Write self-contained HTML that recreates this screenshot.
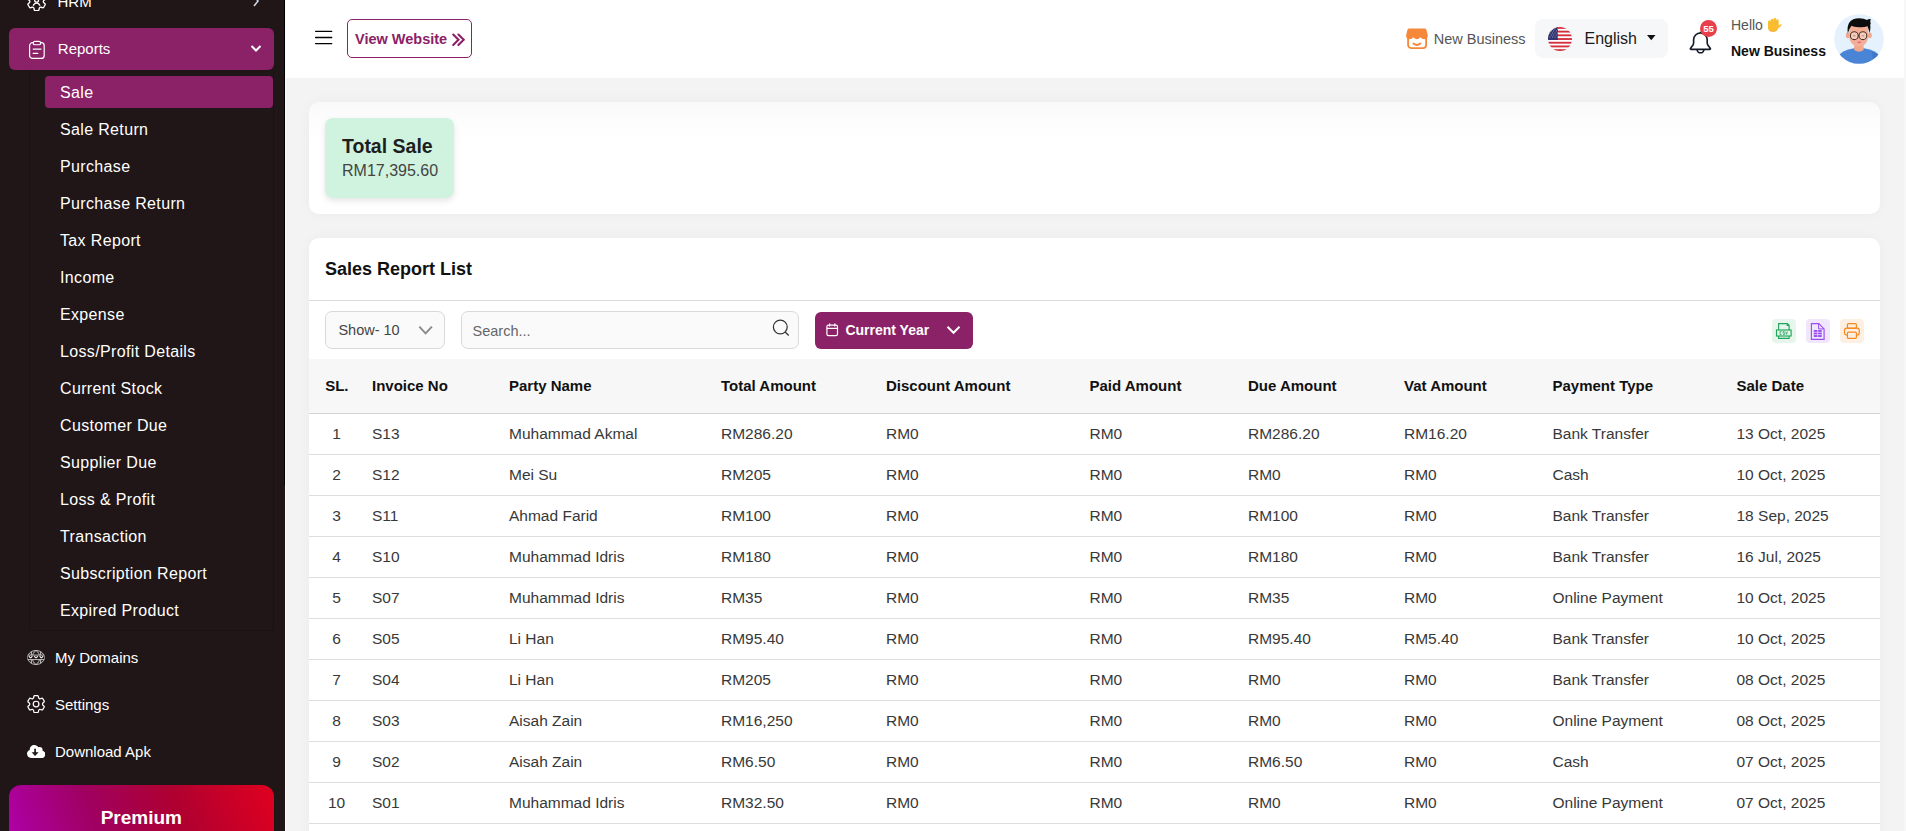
<!DOCTYPE html>
<html><head><meta charset="utf-8">
<style>
*{box-sizing:border-box;margin:0;padding:0}
html,body{width:1906px;height:831px;overflow:hidden;background:#f3f3f3;font-family:"Liberation Sans",sans-serif}
.a{position:absolute;white-space:nowrap;line-height:1}
#sb{position:absolute;left:0;top:0;width:285px;height:831px;background:#201617;overflow:hidden}
.si{position:absolute;left:60px;color:#fff;font-size:16px;line-height:1;letter-spacing:.35px;white-space:nowrap}
.w{color:#fff}
#hd{position:absolute;left:286px;top:0;width:1619px;height:78px;background:#fff}
.card{position:absolute;left:309px;width:1571px;background:#fff;border-radius:10px;box-shadow:0 0 14px rgba(0,0,0,.035)}
.th{position:absolute;font-size:15px;font-weight:700;color:#111;line-height:1;white-space:nowrap;top:378.3px}
.td{position:absolute;font-size:15.5px;color:#383838;line-height:1;white-space:nowrap}
.rb{position:absolute;left:309px;width:1571px;height:1px;background:#dedede}
</style></head><body>
<div id="sb">
  <!-- HRM -->
  <svg class="a" style="left:27.2px;top:-7.8px" width="19.2" height="19.2" viewBox="2.4 2.4 19.2 19.2" fill="none" stroke="#fff" stroke-width="1.35"><path d="M9.594 3.94c.09-.542.56-.94 1.11-.94h2.593c.55 0 1.02.398 1.11.94l.213 1.281c.063.374.313.686.645.87.074.04.147.083.22.127.325.196.72.257 1.075.124l1.217-.456a1.125 1.125 0 0 1 1.37.49l1.296 2.247a1.125 1.125 0 0 1-.26 1.431l-1.003.827c-.293.241-.438.613-.43.992a7.723 7.723 0 0 1 0 .255c-.008.378.137.75.43.991l1.004.827c.424.35.534.955.26 1.43l-1.298 2.247a1.125 1.125 0 0 1-1.369.491l-1.217-.456c-.355-.133-.75-.072-1.076.124a6.47 6.47 0 0 1-.22.128c-.331.183-.581.495-.644.869l-.213 1.281c-.09.543-.56.94-1.110.94h-2.594c-.55 0-1.019-.398-1.11-.94l-.213-1.281c-.062-.374-.312-.686-.644-.87a6.520 6.520 0 0 1-.22-.127c-.325-.196-.72-.257-1.076-.124l-1.217.456a1.125 1.125 0 0 1-1.369-.49l-1.297-2.247a1.125 1.125 0 0 1 .26-1.431l1.004-.827c.292-.24.437-.613.43-.991a6.932 6.932 0 0 1 0-.255c.007-.38-.138-.751-.43-.992l-1.004-.827a1.125 1.125 0 0 1-.26-1.43l1.297-2.247a1.125 1.125 0 0 1 1.37-.491l1.216.456c.356.133.751.072 1.076-.124.072-.044.146-.086.22-.128.332-.183.582-.495.644-.869l.214-1.28Z"/><circle cx="12" cy="10.6" r="1.9"/><path d="M8.6 16.2c.7-1.9 1.9-2.7 3.4-2.7s2.7.8 3.4 2.7"/></svg>
  <div class="a w" style="left:57.5px;top:-5.8px;font-size:15px">HRM</div>
  <svg class="a" style="left:251px;top:-5px" width="10" height="12" viewBox="0 0 10 12" fill="none" stroke="#cfd3e0" stroke-width="1.6"><path d="M3 1l4 5-4 5"/></svg>
  <!-- Reports -->
  <div class="a" style="left:9px;top:28px;width:265px;height:42px;background:#8b2167;border-radius:6px"></div>
  <svg class="a" style="left:28px;top:40px" width="18" height="20" viewBox="0 0 18 20" fill="none" stroke="#fff" stroke-width="1.2"><rect x="1.6" y="2.7" width="14.6" height="15.7" rx="3"/><rect x="5.2" y="1.45" width="7.4" height="3.3" rx="1.6" fill="#8b2167"/><path d="M5.2 9.1h7.8M5.2 13.4h4.6" stroke-linecap="round"/></svg>
  <div class="a w" style="left:57.8px;top:41.2px;font-size:15px">Reports</div>
  <svg class="a" style="left:250px;top:44px" width="12" height="9" viewBox="0 0 12 9" fill="none" stroke="#fff" stroke-width="2"><path d="M1.5 2l4.5 4.5L10.5 2"/></svg>
  <!-- submenu -->
  <div class="a" style="left:29px;top:70px;width:245px;height:561px;border:1px solid #1a1112;border-top:0"></div>
  <div class="a" style="left:45px;top:76px;width:228px;height:32px;background:#8b2167;border-radius:4px"></div>
  <div class="si" style="top:84.5px">Sale</div>
  <div class="si" style="top:121.5px">Sale Return</div>
  <div class="si" style="top:158.5px">Purchase</div>
  <div class="si" style="top:195.5px">Purchase Return</div>
  <div class="si" style="top:232.5px">Tax Report</div>
  <div class="si" style="top:269.5px">Income</div>
  <div class="si" style="top:306.5px">Expense</div>
  <div class="si" style="top:343.5px">Loss/Profit Details</div>
  <div class="si" style="top:380.5px">Current Stock</div>
  <div class="si" style="top:417.5px">Customer Due</div>
  <div class="si" style="top:454.5px">Supplier Due</div>
  <div class="si" style="top:491.5px">Loss &amp; Profit</div>
  <div class="si" style="top:528.5px">Transaction</div>
  <div class="si" style="top:565.5px">Subscription Report</div>
  <div class="si" style="top:602.5px">Expired Product</div>
  <!-- bottom items -->
  <svg class="a" style="left:27px;top:649.5px" width="18" height="15" viewBox="0 0 18 15" fill="none" stroke="#c8c8c8" stroke-width=".95"><ellipse cx="9" cy="7.5" rx="8.4" ry="7"/><path d="M9 .5C6.3 2.3 5.3 4.8 5.3 7.5s1 5.2 3.7 7M9 .5c2.7 1.8 3.7 4.3 3.7 7s-1 5.2-3.7 7M4.4 1.8v3.4M13.6 1.8v3.4M4.4 9.8v3.4M13.6 9.8v3.4"/><rect x=".9" y="5.1" width="16.2" height="4.5" fill="#201617" stroke="none"/><path d="M.8 5.1H17.2M.8 9.6H17.2"/><path d="M1.9 6.1q1.7 3.6 3.4 0M7.3 6.1q1.7 3.6 3.4 0M12.7 6.1q1.7 3.6 3.4 0" stroke="#f0f0f0" stroke-width="1.2"/></svg>
  <svg class="a" style="left:26.9px;top:694.8px" width="18.2" height="18.2" viewBox="2.4 2.4 19.2 19.2" fill="none" stroke="#fff" stroke-width="1.3"><path d="M9.594 3.94c.09-.542.56-.94 1.11-.94h2.593c.55 0 1.02.398 1.11.94l.213 1.281c.063.374.313.686.645.87.074.04.147.083.22.127.325.196.72.257 1.075.124l1.217-.456a1.125 1.125 0 0 1 1.37.49l1.296 2.247a1.125 1.125 0 0 1-.26 1.431l-1.003.827c-.293.241-.438.613-.43.992a7.723 7.723 0 0 1 0 .255c-.008.378.137.75.43.991l1.004.827c.424.35.534.955.26 1.43l-1.298 2.247a1.125 1.125 0 0 1-1.369.491l-1.217-.456c-.355-.133-.75-.072-1.076.124a6.47 6.47 0 0 1-.22.128c-.331.183-.581.495-.644.869l-.213 1.281c-.09.543-.56.94-1.110.94h-2.594c-.55 0-1.019-.398-1.11-.94l-.213-1.281c-.062-.374-.312-.686-.644-.87a6.520 6.520 0 0 1-.22-.127c-.325-.196-.72-.257-1.076-.124l-1.217.456a1.125 1.125 0 0 1-1.369-.49l-1.297-2.247a1.125 1.125 0 0 1 .26-1.431l1.004-.827c.292-.24.437-.613.43-.991a6.932 6.932 0 0 1 0-.255c.007-.38-.138-.751-.43-.992l-1.004-.827a1.125 1.125 0 0 1-.26-1.43l1.297-2.247a1.125 1.125 0 0 1 1.37-.491l1.216.456c.356.133.751.072 1.076-.124.072-.044.146-.086.22-.128.332-.183.582-.495.644-.869l.214-1.28Z"/><circle cx="12" cy="12" r="3"/></svg>
  <svg class="a" style="left:26.8px;top:744.5px" width="18.4" height="13" viewBox="0 32 640 448"><path d="M144 480C64.500 480 0 415.500 0 336c0-62.800 40.200-116.200 96.200-135.900-.1-2.700-.2-5.400-.2-8.100 0-88.400 71.600-160 160-160 59.300 0 111 32.200 138.700 80.200C409.900 102 428.300 96 448 96c53 0 96 43 96 96 0 12.200-2.300 23.800-6.400 34.600C596 238.400 640 290.100 640 352c0 70.700-57.300 128-128 128H144z" fill="#fff"/><path d="M282 178V330" stroke="#201617" stroke-width="58" stroke-linecap="round"/><path d="M180 290H384L282 400Z" fill="#201617" stroke="#201617" stroke-width="20" stroke-linejoin="round"/></svg>
  <div class="a w" style="left:55px;top:650.4px;font-size:15px">My Domains</div>
  <div class="a w" style="left:55px;top:697.4px;font-size:15px">Settings</div>
  <div class="a w" style="left:55px;top:744.4px;font-size:15px">Download Apk</div>
  <div class="a" style="left:9px;top:785px;width:265px;height:80px;border-radius:12px;background:linear-gradient(70deg,#b000b0 0%,#a00060 35%,#b00030 65%,#e00020 100%)"></div>
  <div class="a w" style="left:100.7px;top:807.7px;font-size:19px;font-weight:700">Premium</div>
  <div class="a" style="left:284px;top:0;width:1px;height:485px;background:#000"></div>
</div>
<div class="a" style="left:285px;top:0;width:1px;height:831px;background:#fbfbfb"></div>

<div id="hd"></div>
<!-- hamburger -->
<svg class="a" style="left:310px;top:25px" width="30" height="25" viewBox="0 0 30 25" stroke="#000" stroke-width="1.35" stroke-linecap="round"><path d="M5.6 6.3H21.7M5.6 12.45H21.7M5.6 18.6H21.7"/></svg>
<!-- view website -->
<div class="a" style="left:347px;top:19px;width:125px;height:39px;border:1.5px solid #8b2167;border-radius:5px"></div>
<div class="a" style="left:355px;top:31.8px;font-size:14.5px;font-weight:700;color:#8b2167">View Website</div>
<svg class="a" style="left:451px;top:31.5px" width="15" height="15" viewBox="0 0 15 15" fill="none" stroke="#8b2167" stroke-width="2.1" stroke-linecap="round" stroke-linejoin="miter"><path d="M2.2 2.5l5.3 5.3-5.3 5.3M7.4 2.5l5.3 5.3-5.3 5.3"/></svg>
<!-- store -->
<svg class="a" style="left:1406px;top:28px" width="22" height="22" viewBox="0 0 22 22"><rect x="2.1" y="6" width="18" height="14.1" rx="3" fill="none" stroke="#f5883a" stroke-width="1.8"/><path d="M3.3 .6H18.7Q20 .6 20.5 2L21.8 7.2Q21.9 10.8 19 11.1Q16.2 11.4 14.3 9.2Q12.8 11.2 10.9 11.2Q9 11.2 7.4 9.2Q5.6 11.4 2.9 11.1Q0 10.8 .1 7.2L1.4 2Q1.9 .6 3.3 .6Z" fill="#f5883a"/><path d="M7.4 15.6Q10.9 18.4 14.4 15.6" stroke="#f5883a" stroke-width="1.9" fill="none" stroke-linecap="round"/></svg>
<div class="a" style="left:1433.7px;top:31.9px;font-size:14.5px;color:#555">New Business</div>
<!-- language -->
<div class="a" style="left:1535px;top:19px;width:133px;height:39px;background:#f6f7f9;border-radius:8px"></div>
<svg class="a" style="left:1548px;top:27px" width="24" height="24" viewBox="0 0 24 24"><defs><clipPath id="fc"><circle cx="12" cy="12" r="12"/></clipPath></defs><g clip-path="url(#fc)"><rect width="24" height="24" fill="#fff"/><rect y="0" width="24" height="1.85" fill="#d22f3c"/><rect y="3.7" width="24" height="1.85" fill="#d22f3c"/><rect y="7.4" width="24" height="1.85" fill="#d22f3c"/><rect y="11.1" width="24" height="1.85" fill="#d22f3c"/><rect y="14.8" width="24" height="1.85" fill="#d22f3c"/><rect y="18.5" width="24" height="1.85" fill="#d22f3c"/><rect y="22.2" width="24" height="1.85" fill="#d22f3c"/><rect width="9.9" height="12.95" fill="#2f3470"/><g fill="#fff"><circle cx="2" cy="2" r=".45"/><circle cx="4.5" cy="2" r=".45"/><circle cx="7" cy="2" r=".45"/><circle cx="9.3" cy="2" r=".45"/><circle cx="3.2" cy="4" r=".45"/><circle cx="5.7" cy="4" r=".45"/><circle cx="8.2" cy="4" r=".45"/><circle cx="2" cy="6" r=".45"/><circle cx="4.5" cy="6" r=".45"/><circle cx="7" cy="6" r=".45"/><circle cx="9.3" cy="6" r=".45"/><circle cx="3.2" cy="8" r=".45"/><circle cx="5.7" cy="8" r=".45"/><circle cx="8.2" cy="8" r=".45"/><circle cx="2" cy="10" r=".45"/><circle cx="4.5" cy="10" r=".45"/><circle cx="7" cy="10" r=".45"/><circle cx="9.3" cy="10" r=".45"/></g></g></svg>
<div class="a" style="left:1584.5px;top:31.2px;font-size:16px;color:#1a1a1a">English</div>
<svg class="a" style="left:1647px;top:35.2px" width="8.5" height="5.5" viewBox="0 0 8.5 5.5"><path d="M0 0h8.5L4.25 5.2z" fill="#111"/></svg>
<!-- bell -->
<svg class="a" style="left:1684px;top:15px" width="40" height="45" viewBox="0 0 40 45" fill="none" stroke="#141a26" stroke-width="1.65" stroke-linejoin="round"><path d="M7 34.3H25.8Q26.9 34.3 26.2 33.2L24.2 30.6Q23.2 29.4 23.2 27.8V24.8A6.8 6.8 0 0 0 9.6 24.8V27.8Q9.6 29.4 8.6 30.6L6.6 33.2Q5.9 34.3 7 34.3Z"/><path d="M13.1 34.4A3.4 3.4 0 0 0 19.9 34.4"/><path d="M16.4 16.8V18"/></svg>
<div class="a" style="left:1700px;top:20px;width:17px;height:17px;border-radius:50%;background:#e8404b"></div>
<div class="a" style="left:1700px;top:23.9px;width:17px;text-align:center;font-size:9.6px;font-weight:700;color:#fff">55</div>
<div class="a" style="left:1731px;top:18.35px;font-size:14px;color:#555">Hello</div>
<svg class="a" style="left:1766px;top:16px" width="17" height="18" viewBox="0 0 17 18"><g fill="#fbbd2e"><rect x="2" y="4.6" width="2.7" height="9" rx="1.35"/><rect x="4.6" y="2.9" width="2.8" height="10" rx="1.4"/><rect x="7.4" y="2" width="2.8" height="10" rx="1.4"/><rect x="10.1" y="3.3" width="2.6" height="9" rx="1.3"/><path d="M2 9.5H12.7V12.2L15.3 9.6Q16 9 15.6 8.6Q15 8.1 13.9 8.7L12.5 9.6V11.5Q11.5 15.7 7.3 15.7Q2 15.7 2 11z"/></g><path d="M4.65 5.5V9M7.4 4V9M10.15 5V9" stroke="#e39a1a" stroke-width=".5" opacity=".7"/><path d="M3 14.5Q7 16.8 10.5 14.3" stroke="#f39a2a" stroke-width=".9" fill="none" opacity=".6"/></svg>
<div class="a" style="left:1731px;top:43.85px;font-size:14px;font-weight:700;color:#111">New Business</div>
<!-- avatar -->
<svg class="a" style="left:1834px;top:14px" width="50" height="50" viewBox="0 0 50 50"><defs><clipPath id="av"><circle cx="25" cy="25" r="24.8"/></clipPath></defs><circle cx="25" cy="25" r="24.8" fill="#e5f1fc"/><g clip-path="url(#av)"><path d="M4 42Q8 36.5 20 34.3H30Q42 36.5 46 42V52H4z" fill="#4a84d6"/><path d="M38 37.5Q43 39 46 42V52H40z" fill="#3f76c8"/><path d="M20.2 29H29.6V36Q25 39.5 20.2 36z" fill="#f0a88c"/><ellipse cx="13.8" cy="21.3" rx="2" ry="2.9" fill="#f0a88c"/><ellipse cx="35.8" cy="21.3" rx="2" ry="2.9" fill="#f0a88c"/><path d="M15.2 17Q15.2 9 24.8 9Q34.2 9 34.2 17V22.5Q34 28 30 31Q27.5 32.6 24.8 32.6Q22 32.6 19.5 31Q15.4 28 15.2 22.5z" fill="#f4b096"/><path d="M13.8 19.5Q12.8 12 15.5 8.3Q18.5 4.3 25 4.3Q30 4.3 33 6Q35.5 4.5 37 5.5Q36 6.5 36.3 8Q37.3 9 36.3 10.5Q36.8 14 35.8 19Q34.5 15 33.5 12.2Q30 13.5 25 13.2Q19.5 13 17.5 11.8Q15.5 14 13.8 19.5z" fill="#0d0d0d"/><circle cx="20.3" cy="21.7" r="3.9" fill="#f9e0d6" fill-opacity=".6" stroke="#4a322a" stroke-width="1.05"/><circle cx="28.9" cy="21.7" r="3.9" fill="#f9e0d6" fill-opacity=".6" stroke="#4a322a" stroke-width="1.05"/><path d="M24.3 21.6h.8" stroke="#3a2a26" stroke-width="1.2"/><path d="M19 21.8h2.6M27.6 21.8h2.6" stroke="#777" stroke-width=".7"/><path d="M23.2 27.4Q25.2 28.3 27.3 27.1Q26.8 29.4 25.1 29.3Q23.6 29.2 23.2 27.4z" fill="#e25f86"/></g></svg>

<!-- summary card -->
<div class="card" style="top:102px;height:112px;background:linear-gradient(180deg,#f9f9f9 0,#fdfdfd 20px,#fff 45px)"></div>
<div class="a" style="left:325px;top:118px;width:129px;height:80px;background:#cff3df;border-radius:8px;box-shadow:0 3px 6px rgba(0,0,0,.10)"></div>
<div class="a" style="left:342px;top:136.8px;font-size:19.5px;font-weight:700;color:#1e1e1e">Total Sale</div>
<div class="a" style="left:342px;top:162.6px;font-size:16px;color:#444">RM17,395.60</div>
<!-- list card -->
<div class="card" style="top:238px;height:620px"></div>
<div class="a" style="left:325px;top:260.2px;font-size:18px;font-weight:700;color:#111">Sales Report List</div>
<div class="a" style="left:309px;top:300px;width:1571px;height:1px;background:#dcdcdc"></div>
<div class="a" style="left:325px;top:311px;width:120px;height:38px;border:1px solid #d9d9d9;background:#fafafa;border-radius:7px"></div>
<div class="a" style="left:338.4px;top:322.9px;font-size:14.5px;color:#444">Show- 10</div>
<svg class="a" style="left:418px;top:325px" width="15" height="10" viewBox="0 0 15 10" fill="none" stroke="#8a8a8a" stroke-width="1.9"><path d="M1.3 1.6L7.6 8.3L13.9 1.6"/></svg>
<div class="a" style="left:461px;top:311px;width:338px;height:38px;border:1px solid #d9d9d9;background:#fafafa;border-radius:7px"></div>
<div class="a" style="left:472.5px;top:323.5px;font-size:14.5px;color:#666">Search...</div>
<svg class="a" style="left:772px;top:319px" width="18" height="18" viewBox="0 0 18 18" fill="none" stroke="#333" stroke-width="1.25"><circle cx="8.3" cy="8" r="6.9"/><path d="M13.2 13L16.7 16.5"/></svg>
<div class="a" style="left:815px;top:312px;width:158px;height:37px;background:#8b2167;border-radius:6px"></div>
<svg class="a" style="left:825px;top:322px" width="14" height="15" viewBox="0 0 14 15" fill="none" stroke="#fff" stroke-width="1.2"><rect x="1.9" y="3.1" width="10.6" height="10.5" rx="1.6"/><path d="M1.9 6.3h10.6M4.6 1.4v3M9.8 1.4v3"/></svg>
<div class="a" style="left:845.4px;top:322.6px;font-size:14px;font-weight:700;color:#fff">Current Year</div>
<svg class="a" style="left:946px;top:325px" width="15" height="10" viewBox="0 0 15 10" fill="none" stroke="#fff" stroke-width="2"><path d="M1.5 1.8l6 6 6-6"/></svg>
<!-- export icons -->
<div class="a" style="left:1772px;top:319px;width:24px;height:24px;border-radius:4px;background:#e6f6ec"></div>
<svg class="a" style="left:1772px;top:319px" width="24" height="24" viewBox="0 0 24 24" fill="none" stroke="#22a55a" stroke-width="1.15"><path d="M6.6 11V4.6h8.8l1.7 1.7V11"/><path d="M15.2 4.6v1.9h1.9"/><rect x="4.5" y="11" width="14.6" height="6"/><path d="M6.6 17v2.3h10.5V17"/><path d="M9.6 12.6h-1.6v2.8h1.6M12.6 12.6h-1.5v1.4h1.5v1.4h-1.5M13.7 12.6l.9 2.8.9-2.8" stroke-width=".8"/></svg>
<div class="a" style="left:1806px;top:319px;width:24px;height:24px;border-radius:4px;background:#f1e7fd"></div>
<svg class="a" style="left:1806px;top:319px" width="24" height="24" viewBox="0 0 24 24" fill="none" stroke="#9a4ef0" stroke-width="1.15"><path d="M5.4 4.6h7.4l5.3 5.3v10.4H5.4z"/><path d="M12.6 4.6v5.3h5.3" stroke-width="1"/><rect x="7.8" y="11" width="7.9" height="7" fill="#9a4ef0" stroke="none"/><path d="M7.8 13.3h7.9M7.8 15.6h7.9M11.7 11v7" stroke="#f1e7fd" stroke-width=".7"/></svg>
<div class="a" style="left:1840px;top:319px;width:24px;height:24px;border-radius:4px;background:#fdf0e2"></div>
<svg class="a" style="left:1840px;top:319px" width="24" height="24" viewBox="0 0 24 24" fill="none" stroke="#f68a1f" stroke-width="1.2"><rect x="7.4" y="4.7" width="9" height="4.6" rx="1"/><path d="M7.4 16.1H6.4A2.3 2.3 0 014.5 13.8V11.5A2.3 2.3 0 016.8 9.2H17A2.3 2.3 0 0119.3 11.5V13.8A2.3 2.3 0 0117 16.1H16.4"/><rect x="7.4" y="13.2" width="9" height="6.1" rx="1"/></svg>
<!-- table -->
<div class="a" style="left:309px;top:359px;width:1571px;height:54px;background:#f7f7f7"></div>
<div class="rb" style="top:413px;background:#d6d6d6"></div>
<div class="th" style="left:325.2px">SL.</div>
<div class="th" style="left:372px">Invoice No</div>
<div class="th" style="left:509px">Party Name</div>
<div class="th" style="left:721px">Total Amount</div>
<div class="th" style="left:886px">Discount Amount</div>
<div class="th" style="left:1089.5px">Paid Amount</div>
<div class="th" style="left:1248px">Due Amount</div>
<div class="th" style="left:1404px">Vat Amount</div>
<div class="th" style="left:1552.5px">Payment Type</div>
<div class="th" style="left:1736.5px">Sale Date</div>
<div class="td" style="left:311px;width:51px;text-align:center;top:425.6px">1</div><div class="td" style="left:372px;top:425.6px">S13</div><div class="td" style="left:509px;top:425.6px">Muhammad Akmal</div><div class="td" style="left:721px;top:425.6px">RM286.20</div><div class="td" style="left:886px;top:425.6px">RM0</div><div class="td" style="left:1089.5px;top:425.6px">RM0</div><div class="td" style="left:1248px;top:425.6px">RM286.20</div><div class="td" style="left:1404px;top:425.6px">RM16.20</div><div class="td" style="left:1552.5px;top:425.6px">Bank Transfer</div><div class="td" style="left:1736.5px;top:425.6px">13 Oct, 2025</div><div class="rb" style="top:454px"></div>
<div class="td" style="left:311px;width:51px;text-align:center;top:466.6px">2</div><div class="td" style="left:372px;top:466.6px">S12</div><div class="td" style="left:509px;top:466.6px">Mei Su</div><div class="td" style="left:721px;top:466.6px">RM205</div><div class="td" style="left:886px;top:466.6px">RM0</div><div class="td" style="left:1089.5px;top:466.6px">RM0</div><div class="td" style="left:1248px;top:466.6px">RM0</div><div class="td" style="left:1404px;top:466.6px">RM0</div><div class="td" style="left:1552.5px;top:466.6px">Cash</div><div class="td" style="left:1736.5px;top:466.6px">10 Oct, 2025</div><div class="rb" style="top:495px"></div>
<div class="td" style="left:311px;width:51px;text-align:center;top:507.6px">3</div><div class="td" style="left:372px;top:507.6px">S11</div><div class="td" style="left:509px;top:507.6px">Ahmad Farid</div><div class="td" style="left:721px;top:507.6px">RM100</div><div class="td" style="left:886px;top:507.6px">RM0</div><div class="td" style="left:1089.5px;top:507.6px">RM0</div><div class="td" style="left:1248px;top:507.6px">RM100</div><div class="td" style="left:1404px;top:507.6px">RM0</div><div class="td" style="left:1552.5px;top:507.6px">Bank Transfer</div><div class="td" style="left:1736.5px;top:507.6px">18 Sep, 2025</div><div class="rb" style="top:536px"></div>
<div class="td" style="left:311px;width:51px;text-align:center;top:548.6px">4</div><div class="td" style="left:372px;top:548.6px">S10</div><div class="td" style="left:509px;top:548.6px">Muhammad Idris</div><div class="td" style="left:721px;top:548.6px">RM180</div><div class="td" style="left:886px;top:548.6px">RM0</div><div class="td" style="left:1089.5px;top:548.6px">RM0</div><div class="td" style="left:1248px;top:548.6px">RM180</div><div class="td" style="left:1404px;top:548.6px">RM0</div><div class="td" style="left:1552.5px;top:548.6px">Bank Transfer</div><div class="td" style="left:1736.5px;top:548.6px">16 Jul, 2025</div><div class="rb" style="top:577px"></div>
<div class="td" style="left:311px;width:51px;text-align:center;top:589.6px">5</div><div class="td" style="left:372px;top:589.6px">S07</div><div class="td" style="left:509px;top:589.6px">Muhammad Idris</div><div class="td" style="left:721px;top:589.6px">RM35</div><div class="td" style="left:886px;top:589.6px">RM0</div><div class="td" style="left:1089.5px;top:589.6px">RM0</div><div class="td" style="left:1248px;top:589.6px">RM35</div><div class="td" style="left:1404px;top:589.6px">RM0</div><div class="td" style="left:1552.5px;top:589.6px">Online Payment</div><div class="td" style="left:1736.5px;top:589.6px">10 Oct, 2025</div><div class="rb" style="top:618px"></div>
<div class="td" style="left:311px;width:51px;text-align:center;top:630.6px">6</div><div class="td" style="left:372px;top:630.6px">S05</div><div class="td" style="left:509px;top:630.6px">Li Han</div><div class="td" style="left:721px;top:630.6px">RM95.40</div><div class="td" style="left:886px;top:630.6px">RM0</div><div class="td" style="left:1089.5px;top:630.6px">RM0</div><div class="td" style="left:1248px;top:630.6px">RM95.40</div><div class="td" style="left:1404px;top:630.6px">RM5.40</div><div class="td" style="left:1552.5px;top:630.6px">Bank Transfer</div><div class="td" style="left:1736.5px;top:630.6px">10 Oct, 2025</div><div class="rb" style="top:659px"></div>
<div class="td" style="left:311px;width:51px;text-align:center;top:671.6px">7</div><div class="td" style="left:372px;top:671.6px">S04</div><div class="td" style="left:509px;top:671.6px">Li Han</div><div class="td" style="left:721px;top:671.6px">RM205</div><div class="td" style="left:886px;top:671.6px">RM0</div><div class="td" style="left:1089.5px;top:671.6px">RM0</div><div class="td" style="left:1248px;top:671.6px">RM0</div><div class="td" style="left:1404px;top:671.6px">RM0</div><div class="td" style="left:1552.5px;top:671.6px">Bank Transfer</div><div class="td" style="left:1736.5px;top:671.6px">08 Oct, 2025</div><div class="rb" style="top:700px"></div>
<div class="td" style="left:311px;width:51px;text-align:center;top:712.6px">8</div><div class="td" style="left:372px;top:712.6px">S03</div><div class="td" style="left:509px;top:712.6px">Aisah Zain</div><div class="td" style="left:721px;top:712.6px">RM16,250</div><div class="td" style="left:886px;top:712.6px">RM0</div><div class="td" style="left:1089.5px;top:712.6px">RM0</div><div class="td" style="left:1248px;top:712.6px">RM0</div><div class="td" style="left:1404px;top:712.6px">RM0</div><div class="td" style="left:1552.5px;top:712.6px">Online Payment</div><div class="td" style="left:1736.5px;top:712.6px">08 Oct, 2025</div><div class="rb" style="top:741px"></div>
<div class="td" style="left:311px;width:51px;text-align:center;top:753.6px">9</div><div class="td" style="left:372px;top:753.6px">S02</div><div class="td" style="left:509px;top:753.6px">Aisah Zain</div><div class="td" style="left:721px;top:753.6px">RM6.50</div><div class="td" style="left:886px;top:753.6px">RM0</div><div class="td" style="left:1089.5px;top:753.6px">RM0</div><div class="td" style="left:1248px;top:753.6px">RM6.50</div><div class="td" style="left:1404px;top:753.6px">RM0</div><div class="td" style="left:1552.5px;top:753.6px">Cash</div><div class="td" style="left:1736.5px;top:753.6px">07 Oct, 2025</div><div class="rb" style="top:782px"></div>
<div class="td" style="left:311px;width:51px;text-align:center;top:794.6px">10</div><div class="td" style="left:372px;top:794.6px">S01</div><div class="td" style="left:509px;top:794.6px">Muhammad Idris</div><div class="td" style="left:721px;top:794.6px">RM32.50</div><div class="td" style="left:886px;top:794.6px">RM0</div><div class="td" style="left:1089.5px;top:794.6px">RM0</div><div class="td" style="left:1248px;top:794.6px">RM0</div><div class="td" style="left:1404px;top:794.6px">RM0</div><div class="td" style="left:1552.5px;top:794.6px">Online Payment</div><div class="td" style="left:1736.5px;top:794.6px">07 Oct, 2025</div><div class="rb" style="top:823px"></div>
<div class="a" style="left:1904px;top:0;width:2px;height:831px;background:#f7f7f7"></div>
</body></html>
